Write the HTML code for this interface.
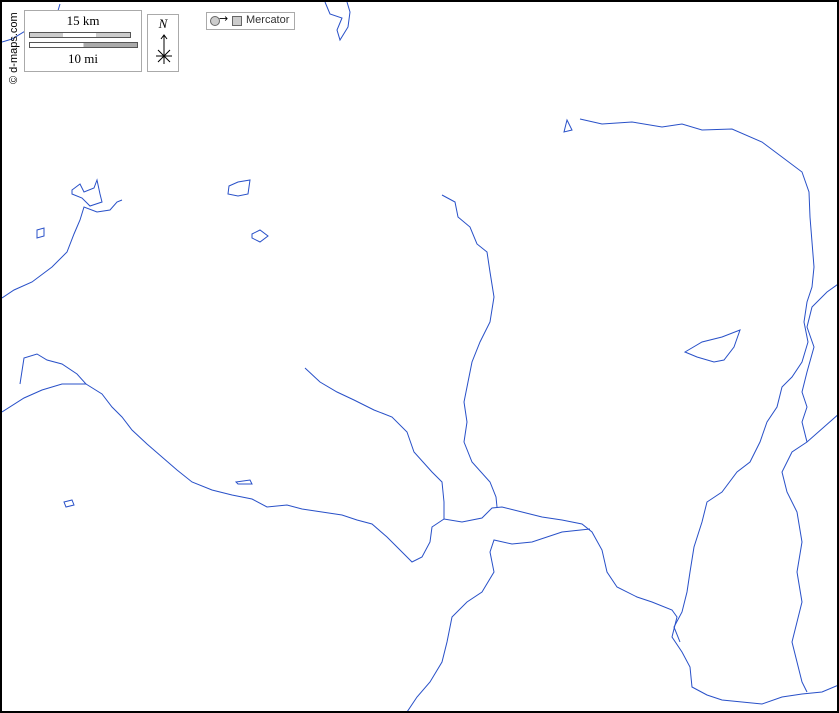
<!DOCTYPE html>
<html><head><style>
html,body{margin:0;padding:0;background:#fff}
#w{position:relative;width:839px;height:713px;box-sizing:border-box;border:2px solid #000;overflow:hidden}
svg{position:absolute;left:0;top:0}
.b{position:absolute;border:1px solid #999;background:#fff}
</style></head><body>
<div id="w">
<svg width="839" height="713" viewBox="0 0 839 713">
<g fill="none" stroke="#2850c8" stroke-width="1">
<path d="M0,40 L10,37 L25,28 L38,22 L50,18 L55,12 L58,2"/>
<path d="M0,296 L12,288 L30,280 L50,265 L65,250 L72,232 L78,218 L82,205 L95,210 L108,208 L115,200 L120,198"/>
<path d="M70,188 L78,182 L82,190 L92,186 L95,178 L98,192 L100,200 L88,204 L80,196 L70,192Z"/>
<path d="M35,228 L42,226 L42,234 L35,236Z"/>
<path d="M227,184 L236,180 L248,178 L246,192 L236,194 L226,192Z"/>
<path d="M250,232 L258,228 L266,234 L258,240 L250,236Z"/>
<path d="M18,382 L22,356 L35,352 L45,358 L60,362 L75,372 L84,382 L60,382 L40,388 L22,396 L0,410"/>
<path d="M84,382 L100,392 L110,405 L120,415 L130,428 L145,442 L160,455 L175,468 L190,480 L210,488 L230,493 L250,497 L265,505 L285,503 L300,507 L320,510 L340,513 L355,518 L370,522 L385,535 L400,550 L410,560 L420,555 L428,540 L430,525 L442,517 L460,520 L480,516 L490,506 L500,505 L520,510 L540,515 L560,518 L580,522 L590,530 L600,548 L605,570 L615,585 L635,595 L650,600 L670,608 L675,615 L670,635 L680,650 L688,665 L690,685 L705,693 L720,698 L740,700 L760,702 L780,695 L800,692 L820,690 L839,682"/>
<path d="M303,366 L318,380 L335,390 L352,398 L372,408 L390,415 L405,430 L412,450 L430,470 L440,480 L442,500 L442,517"/>
<path d="M234,480 L248,478 L250,482 L236,482Z"/>
<path d="M62,500 L70,498 L72,503 L64,505Z"/>
<path d="M440,193 L453,200 L456,215 L468,225 L475,242 L485,250 L488,270 L492,295 L488,320 L478,340 L470,360 L466,380 L462,400 L465,420 L462,440 L470,460 L488,480 L494,495 L495,505"/>
<path d="M588,527 L560,530 L530,540 L510,542 L492,538 L488,550 L492,570 L480,590 L465,600 L450,615 L445,640 L440,660 L428,680 L415,695 L405,710"/>
<path d="M565,118 L570,128 L562,130 L565,118Z"/>
<path d="M578,117 L600,122 L630,120 L660,125 L680,122 L700,128 L730,127 L760,140 L780,155 L800,170 L807,190 L808,215 L810,240 L812,265 L810,285 L805,300 L802,320 L806,340 L800,360 L790,375 L780,385 L775,405 L765,420 L758,440 L748,460 L735,470 L720,490 L705,500 L700,520 L692,545 L688,570 L685,590 L680,610 L672,625 L678,640"/>
<path d="M839,280 L825,290 L810,305 L805,325 L812,345 L805,370 L800,390 L805,405 L800,420 L805,440"/>
<path d="M839,410 L822,425 L805,440 L790,450 L780,470 L785,490 L795,510 L800,540 L795,570 L800,600 L795,620 L790,640 L795,660 L800,680 L805,690"/>
<path d="M683,350 L700,340 L720,335 L738,328 L732,345 L722,358 L712,360 L695,355Z"/>
<path d="M323,0 L328,12 L340,16 L335,28 L338,38 L346,25 L348,10 L345,0"/>
</g>
</svg>
<div class="b" style="left:22px;top:8px;width:116px;height:60px;border-color:#aaa"></div>
<div style="position:absolute;left:22px;top:11px;width:118px;text-align:center;font:13px 'Liberation Serif',serif">15 km</div>
<div style="position:absolute;left:27px;top:30px;width:100px;height:4px;border:1px solid #555;background:linear-gradient(90deg,#ccc 33%,#fff 33%,#fff 66%,#ccc 66%)"></div>
<div style="position:absolute;left:27px;top:40px;width:107px;height:4px;border:1px solid #555;background:linear-gradient(90deg,#fff 50%,#aaa 50%)"></div>
<div style="position:absolute;left:22px;top:49px;width:118px;text-align:center;font:13px 'Liberation Serif',serif">10 mi</div>
<div class="b" style="left:145px;top:12px;width:30px;height:56px;border-color:#aaa"></div>
<div style="position:absolute;left:146px;top:14px;width:30px;text-align:center;font:italic 13px 'Liberation Serif',serif">N</div>
<svg width="839" height="713" style="pointer-events:none"><g stroke="#000" stroke-width="1" fill="none"><path d="M162,33 V62 M159,37 L162,33 L165,37 M154,54 H170 M156,48 L168,60 M168,48 L156,60"/></g></svg>
<div class="b" style="left:204px;top:10px;width:87px;height:16px;border-color:#aaa"></div>
<div style="position:absolute;left:208px;top:14px;width:8px;height:8px;border-radius:50%;background:#ccc;border:1px solid #666"></div>
<div style="position:absolute;left:217px;top:10px;font:11px 'DejaVu Sans',sans-serif">→</div>
<div style="position:absolute;left:230px;top:14px;width:8px;height:8px;background:#ccc;border:1px solid #666"></div>
<div style="position:absolute;left:244px;top:12px;font:11px 'Liberation Sans',sans-serif;color:#333">Mercator</div>
<div style="position:absolute;left:-28px;top:36px;width:80px;transform:rotate(-90deg);font:11px 'Liberation Sans',sans-serif;color:#000;white-space:nowrap">© d-maps.com</div>
</div>
</body></html>
